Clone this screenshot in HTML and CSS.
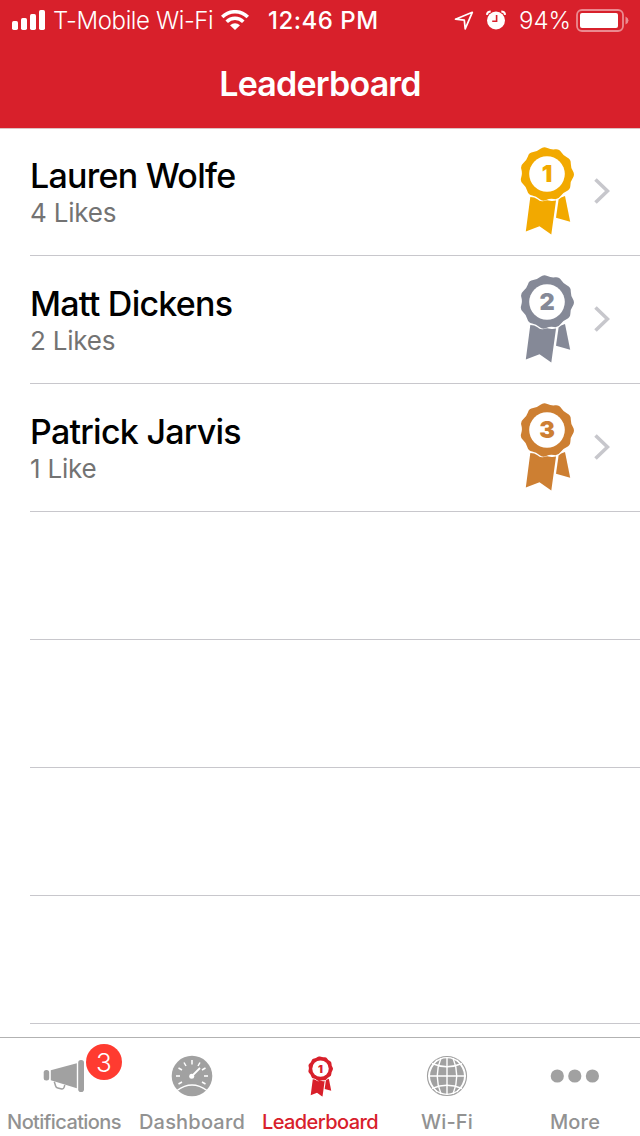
FILE: index.html
```html
<!DOCTYPE html>
<html lang="en">
<head>
    <meta charset="UTF-8">
    <meta name="viewport" content="width=device-width, initial-scale=1.0">
    <title>Leaderboard</title>
    <link rel="stylesheet" href="styles.css">
</head>
<body>
    <!-- shared icons -->
    <svg class="sprite" width="0" height="0">
        <symbol id="ribbon" viewBox="0 0 54 88">
            <path fill="currentColor" d="M27.3 1Q31 2.8 35.1 2.3Q39.2 1.7 41.3 5.3Q43.4 8.8 47.2 10.6Q50.9 12.3 50.8 16.5Q50.7 20.6 52.9 24.1Q55.1 27.6 52.8 31Q50.4 34.3 50.4 38.5Q50.3 42.7 46.5 44.3Q42.6 45.8 40.4 49.3Q38.1 52.8 34.1 52.1Q30 51.3 26.2 53Q22.4 54.7 19.4 51.9Q16.3 49.1 12.3 48.5Q8.2 47.8 7.2 43.8Q6.1 39.8 3 37.1Q-.1 34.4 1.2 30.5Q2.5 26.5 1.4 22.5Q.2 18.5 3.4 15.9Q6.6 13.3 7.9 9.4Q9.1 5.4 13.2 5Q17.3 4.5 20.5 1.8Q23.6-.9 27.3 1Z"/>
            <circle cx="27" cy="27" r="17.8" fill="#fff"/>
            <path fill="currentColor" d="M10.3 50Q14.5 50 17.5 52.3Q20 54.8 24 53.9Q27 52.8 30 53.8Q33 54.4 36 53.6L31.3 87.5L19.5 79.3L5.8 84.5Z"/>
            <path fill="currentColor" d="M38.6 52.6Q40.5 50 45 49L50.2 74.8L36 70.8Z"/>
        </symbol>
        <symbol id="chevron" viewBox="0 0 16 26">
            <path d="M1.5 1.5L13.5 13L1.5 24.5" fill="none" stroke="#c7c7cc" stroke-width="3.6"/>
        </symbol>
    </svg>

    <header class="header">
        <div class="status-bar">
            <svg class="signal" width="33" height="20" viewBox="0 0 33 20" fill="#fff">
                <rect x="0" y="11" width="6" height="9" rx="1.7"/>
                <rect x="9" y="8" width="6" height="12" rx="1.7"/>
                <rect x="18" y="4" width="6" height="16" rx="1.7"/>
                <rect x="27" y="0" width="6" height="20" rx="1.7"/>
            </svg>
            <span class="carrier">T-Mobile Wi-Fi</span>
            <svg class="wifi" width="28" height="20" viewBox="0 0 28 20">
                <g fill="none" stroke="#fff" stroke-width="3.6">
                    <path d="M1.2 7A18.2 18.2 0 0 1 26.8 7"/>
                    <path d="M5.7 11.7A11.8 11.8 0 0 1 22.3 11.7"/>
                </g>
                <path fill="#fff" d="M14 20L9 15.3Q14 11.3 19 15.3Z"/>
            </svg>
            <span class="time">12:46 PM</span>
            <div class="status-right">
                <svg class="location" width="20" height="20" viewBox="0 0 20 20">
                    <path d="M1.5 9.2L18.3 2.3L11.2 18.8L10.3 10.2Z" fill="none" stroke="#fff" stroke-width="1.7" stroke-linejoin="round"/>
                </svg>
                <svg class="alarm" width="20" height="20" viewBox="0 0 20 20">
                    <circle cx="10" cy="10.5" r="9" fill="#fff"/>
                    <path d="M.8 4.8Q1.5 1.6 4.7 1.6M15.3 1.6Q18.5 1.6 19.2 4.8" fill="none" stroke="#fff" stroke-width="2"/>
                    <path d="M10.6 5V11.2H6.2" fill="none" stroke="#d8202b" stroke-width="1.6"/>
                </svg>
                <span class="percent">94%</span>
                <svg class="battery" width="53" height="23" viewBox="0 0 53 23">
                    <rect x="1" y="1" width="46" height="21" rx="5" fill="none" stroke="#fff" stroke-opacity=".48" stroke-width="1.8"/>
                    <rect x="4" y="4" width="38" height="15" rx="2" fill="#fff"/>
                    <path d="M49.5 7.5Q52.5 9 52.5 11.5Q52.5 14 49.5 15.5Z" fill="#fff" fill-opacity=".48"/>
                </svg>
            </div>
        </div>
        <h1 class="title">Leaderboard</h1>
    </header>

    <main class="list">
        <div class="row">
            <div class="person">
                <div class="name">Lauren Wolfe</div>
                <div class="likes">4 Likes</div>
            </div>
            <svg class="medal gold" viewBox="0 0 54 88">
                <use href="#ribbon"/>
                <text x="27" y="35.3">1</text>
            </svg>
            <svg class="chevron"><use href="#chevron"/></svg>
        </div>
        <div class="row">
            <div class="person">
                <div class="name">Matt Dickens</div>
                <div class="likes">2 Likes</div>
            </div>
            <svg class="medal silver" viewBox="0 0 54 88">
                <use href="#ribbon"/>
                <text x="27" y="35.3">2</text>
            </svg>
            <svg class="chevron"><use href="#chevron"/></svg>
        </div>
        <div class="row">
            <div class="person">
                <div class="name">Patrick Jarvis</div>
                <div class="likes">1 Like</div>
            </div>
            <svg class="medal bronze" viewBox="0 0 54 88">
                <use href="#ribbon"/>
                <text x="27" y="35.3">3</text>
            </svg>
            <svg class="chevron"><use href="#chevron"/></svg>
        </div>
        <div class="row"></div>
        <div class="row"></div>
        <div class="row"></div>
        <div class="row"></div>
    </main>

    <nav class="tab-bar">
        <a class="tab">
            <div class="tab-icon">
                <svg width="42" height="34" viewBox="0 0 42 34" fill="#a1a1a1">
                    <rect x=".7" y="11" width="5.5" height="10.5" rx="2.5"/>
                    <path d="M7.8 11.2L33.8 4.2V29.2L7.8 21.2Z"/>
                    <rect x="35.2" y="1" width="5.8" height="32" rx="2.8"/>
                    <path d="M11.3 22.8L12.6 27Q13.1 28.6 14.8 29L18.8 29.9Q20.6 30.1 21.1 28.4L21.8 26" fill="none" stroke="#a1a1a1" stroke-width="1.5"/>
                </svg>
                <span class="badge">3</span>
            </div>
            <span class="tab-label tight">Notifications</span>
        </a>
        <a class="tab">
            <div class="tab-icon">
                <svg width="42" height="42" viewBox="0 0 42 42">
                    <circle cx="21" cy="21" r="20.3" fill="#a1a1a1"/>
                    <g fill="none" stroke="#fff" stroke-width="1.5">
                        <path d="M6 35.5Q21 24.5 36 35.5"/>
                        <path d="M5 21H9M33 21H37M21 5V9.5M13 7.5L15 11M29 7.5L27 11M7.5 13L11 15M34.5 13L31 15M7.5 29L11 27M34.5 29L31 27"/>
                        <path d="M21 21L29 13" stroke-width="1.8"/>
                    </g>
                    <circle cx="20.7" cy="21.3" r="2.5" fill="#fff"/>
                </svg>
            </div>
            <span class="tab-label loose">Dashboard</span>
        </a>
        <a class="tab active">
            <div class="tab-icon">
                <svg class="medal small" viewBox="0 0 54 88">
                    <use href="#ribbon"/>
                    <text x="27" y="36">1</text>
                </svg>
            </div>
            <span class="tab-label tight">Leaderboard</span>
        </a>
        <a class="tab shifted">
            <div class="tab-icon">
                <svg width="42" height="42" viewBox="0 0 42 42">
                    <circle cx="21" cy="21" r="19.5" fill="#fff" stroke="#a1a1a1" stroke-width="1.2"/>
                    <circle cx="21" cy="21" r="17.7" fill="#a1a1a1"/>
                    <g fill="none" stroke="#fff" stroke-width="1.4">
                        <path d="M21 2V40M2 21H40"/>
                        <path d="M15 3Q7.5 21 15 39M27 3Q34.5 21 27 39"/>
                        <path d="M10 5Q-6 21 10 37" transform="translate(1.2)"/>
                        <path d="M32 5Q48 21 32 37" transform="translate(-1.2)"/>
                        <path d="M6 8.5Q21 15 36 8.5M6 33.5Q21 27 36 33.5"/>
                    </g>
                </svg>
            </div>
            <span class="tab-label loose">Wi-Fi</span>
        </a>
        <a class="tab shifted">
            <div class="tab-icon">
                <svg width="50" height="14" viewBox="0 0 50 14" fill="#a1a1a1">
                    <circle cx="7.3" cy="7" r="6.6"/>
                    <circle cx="24.8" cy="7" r="6.6"/>
                    <circle cx="42.4" cy="7" r="6.6"/>
                </svg>
            </div>
            <span class="tab-label loose">More</span>
        </a>
    </nav>
</body>
</html>
```
FILE: styles.css
```css
* {
    box-sizing: border-box;
}

body {
    display: flex;
    flex-direction: column;
    height: 100vh;
    margin: 0;
    overflow: hidden;
    background-color: #fff;
    font-family: Inter, "Liberation Sans", sans-serif;
}

.sprite {
    position: absolute;
}

.header {
    flex: none;
    height: 129px;
    background-color: #d8202b;
    border-bottom: 1px solid #ddc1c2;
    color: #fff;
}

.status-bar {
    display: flex;
    align-items: center;
    height: 40px;
    padding: 0 12px;
    font-size: 24px;
    line-height: 38px;
    white-space: nowrap;
}

.status-bar span {
    margin-top: 2px;
}

.carrier {
    width: 160px;
    margin-left: 8px;
    font-weight: 300;
    letter-spacing: -0.4px;
}

.wifi {
    margin-left: 8px;
}

.time {
    margin-left: 19px;
    font-weight: 500;
    letter-spacing: 0.5px;
}

.status-right {
    display: flex;
    align-items: center;
    margin-left: auto;
}

.alarm {
    margin-left: 12px;
}

.percent {
    width: 50px;
    margin: 0 7px 0 13px;
    font-weight: 300;
}

.battery {
    margin-right: -1px;
}

.title {
    margin: 0;
    font-size: 34px;
    font-weight: 600;
    letter-spacing: -0.8px;
    line-height: 88px;
    text-align: center;
}

.list {
    flex: 1;
    min-height: 0;
    margin-top: -1px;
    padding-left: 30px;
    overflow: hidden;
}

.row {
    display: flex;
    align-items: center;
    height: 128px;
    padding-right: 30px;
    border-bottom: 1px solid #c8c7cc;
}

.person {
    flex: 1;
    margin-top: 2px;
    white-space: nowrap;
}

.name {
    font-size: 34px;
    font-weight: 500;
    letter-spacing: -0.75px;
    line-height: 40px;
    color: #000;
}

.likes {
    font-size: 26px;
    letter-spacing: -0.2px;
    line-height: 34px;
    color: #737373;
}

.medal {
    width: 54px;
    height: 88px;
}

.medal text {
    font-size: 23.5px;
    font-weight: 900;
    text-anchor: middle;
    fill: currentColor;
}

.row svg {
    margin-bottom: 2px;
}

.gold {
    color: #f2a900;
}

.silver {
    color: #858997;
}

.bronze {
    color: #cd7f32;
}

.chevron {
    width: 16px;
    height: 26px;
    margin-left: 20px;
}

.tab-bar {
    display: grid;
    grid-template-columns: repeat(5, 1fr);
    flex: none;
    height: 99px;
    border-top: 1px solid #b2b2b2;
}

.tab {
    display: flex;
    flex-direction: column;
    align-items: center;
    color: #929292;
}

.tab.active {
    color: #d8202b;
}

.shifted {
    padding-right: 2px;
}

.tab-icon {
    position: relative;
    display: flex;
    align-items: center;
    justify-content: center;
    height: 76px;
}

.tab-label {
    font-size: 20px;
    font-weight: 500;
    line-height: 16px;
    white-space: nowrap;
}

.tight {
    letter-spacing: -0.6px;
}

.loose {
    letter-spacing: 0.2px;
}

.small {
    width: 25px;
    height: 41px;
}

/* unread counter over the megaphone */
.badge {
    position: absolute;
    top: 6px;
    left: 43px;
    width: 36px;
    height: 36px;
    border-radius: 50%;
    background-color: #ff3b30;
    color: #fff;
    font-size: 26px;
    font-weight: 300;
    line-height: 37px;
    text-align: center;
}
```
